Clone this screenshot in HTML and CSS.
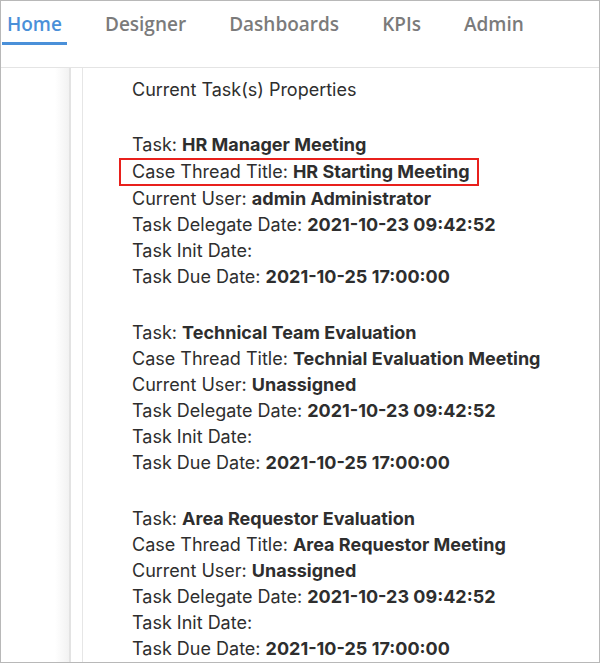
FILE: index.html
```html
<!DOCTYPE html>
<html lang="en">

<head>
  <meta charset="UTF-8">
  <meta name="viewport" content="width=device-width, initial-scale=1.0">
  <title>Home</title>
  <link rel="stylesheet" href="styles.css">
</head>

<body>
  <div class="frame">
    <nav class="tabs">
      <a class="tab active" href="#">Home</a>
      <a class="tab" href="#">Designer</a>
      <a class="tab" href="#">Dashboards</a>
      <a class="tab" href="#">KPIs</a>
      <a class="tab" href="#">Admin</a>
    </nav>

    <div class="main">
      <div class="sidebar"></div>
      <div class="splitter"></div>

      <div class="content">
        <p class="heading">Current Task(s) Properties</p>

        <div class="task">
          <div>Task: <b>HR Manager Meeting</b></div>
          <div><span class="highlight">Case Thread Title: <b>HR Starting Meeting</b></span></div>
          <div>Current User: <b>admin Administrator</b></div>
          <div>Task Delegate Date: <b>2021-10-23 09:42:52</b></div>
          <div>Task Init Date:</div>
          <div>Task Due Date: <b>2021-10-25 17:00:00</b></div>
        </div>

        <div class="task">
          <div>Task: <b>Technical Team Evaluation</b></div>
          <div>Case Thread Title: <b>Technial Evaluation Meeting</b></div>
          <div>Current User: <b>Unassigned</b></div>
          <div>Task Delegate Date: <b>2021-10-23 09:42:52</b></div>
          <div>Task Init Date:</div>
          <div>Task Due Date: <b>2021-10-25 17:00:00</b></div>
        </div>

        <div class="task">
          <div>Task: <b>Area Requestor Evaluation</b></div>
          <div>Case Thread Title: <b>Area Requestor Meeting</b></div>
          <div>Current User: <b>Unassigned</b></div>
          <div>Task Delegate Date: <b>2021-10-23 09:42:52</b></div>
          <div>Task Init Date:</div>
          <div>Task Due Date: <b>2021-10-25 17:00:00</b></div>
        </div>
      </div>
    </div>
  </div>
</body>

</html>
```

FILE: styles.css
```css
html, body {
  margin: 0;
  height: 100%;
}

body {
  font-family: Inter, "Open Sans", Arial, sans-serif;
  color: #333;
  background: #fff;
}

.frame {
  box-sizing: border-box;
  height: 663px;
  border: 1px solid #b8b8b8;
  overflow: hidden;
  display: flex;
  flex-direction: column;
}

.tabs {
  flex-shrink: 0;
  display: flex;
  height: 66px;
  padding-left: 1px;
  border-bottom: 1px solid #e4e4e4;
}

.tab {
  display: block;
  height: 41px;
  padding: 10px 5px 0;
  margin-right: 33px;
  box-sizing: border-box;
  font-family: "Open Sans", Arial, sans-serif;
  font-size: 19px;
  font-weight: 600;
  line-height: 26px;
  color: #7b7b7b;
  text-decoration: none;
}

.tab.active {
  color: #4a90d9;
  border-bottom: 3px solid #4a90d9;
  height: 44px;
}

.main {
  flex: 1;
  display: flex;
}

.sidebar {
  width: 68px;
  background: linear-gradient(to right, #fff 54px, #f2f2f2);
  border-right: 2px solid #e3e3e3;
}

.splitter {
  width: 11px;
  border-right: 1px solid #e6e6e6;
}

.content {
  flex: 1;
  padding: 9px 0 0 49px;
  font-size: 18px;
  line-height: 26px;
  color: #2e2e2e;
}

.heading {
  margin: 0 0 29px;
}

.task {
  margin-bottom: 30px;
}

.task b {
  font-weight: 700;
}

.highlight {
  display: inline-block;
  margin-left: -13px;
  padding: 0 7px 0 11px;
  line-height: 24px;
  border: 2px solid #e8201c;
}
```
